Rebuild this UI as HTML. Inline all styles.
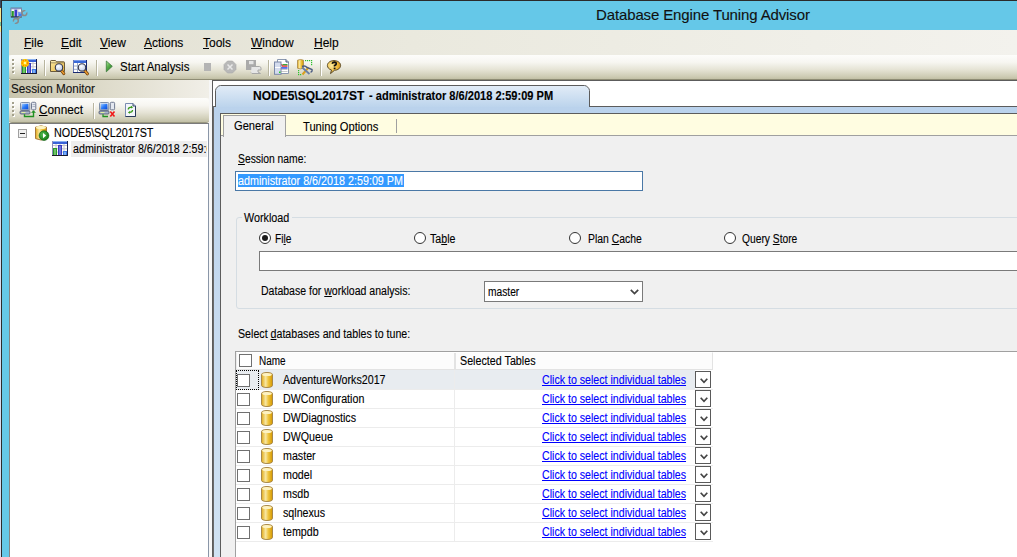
<!DOCTYPE html>
<html><head><meta charset="utf-8">
<style>
*{margin:0;padding:0;box-sizing:border-box}
html,body{width:1017px;height:557px;overflow:hidden;background:#fff}
body{position:relative;font-family:"Liberation Sans",sans-serif;font-size:12px;color:#000}
.a{position:absolute}
.t{position:absolute;white-space:nowrap;line-height:1;transform-origin:0 0;-webkit-text-stroke:0.12px currentColor}
u{text-decoration:underline;text-underline-offset:1px}
</style></head><body>
<svg width="0" height="0" style="position:absolute"><defs>
<linearGradient id="gold" x1="0" x2="1"><stop offset="0" stop-color="#e0aa18"/><stop offset=".38" stop-color="#f8e7a2"/><stop offset=".62" stop-color="#efc43e"/><stop offset="1" stop-color="#d49800"/></linearGradient>
<g id="db"><path d="M0.5 2.5 A5.5 2 0 0 1 11.5 2.5 V13.5 A5.5 2 0 0 1 0.5 13.5 Z" fill="url(#gold)" stroke="#a8884a" stroke-width="1"/><ellipse cx="6" cy="2.6" rx="4.8" ry="1.5" fill="#fdf2c2"/></g>
</defs></svg><div class="a" style="left:0px;top:0px;width:1px;height:557px;background:linear-gradient(#3a4a60 0,#3a4a60 8px,#f8e890 8px,#f8e890 22px,#7cc4a0 22px,#7cc4a0 26px,#f8e890 26px,#f8e890 32px,#d8dcf0 32px)"></div>
<div class="a" style="left:1px;top:0px;width:1016px;height:557px;background:#2b2b2b"></div>
<div class="a" style="left:2px;top:1px;width:1015px;height:556px;background:#65c8e8"></div>
<svg class="a" style="left:0;top:0" width="32" height="30" viewBox="0 0 32 30">
<rect x="11" y="8" width="10.5" height="9" fill="#fff" stroke="#6a7080" stroke-width=".8"/>
<rect x="11" y="8" width="10.5" height="1.3" fill="#8090c0"/>
<path d="M11 12H21.5M14.5 9V17M18 9V17" stroke="#c8c8d0" stroke-width=".8"/>
<rect x="11.6" y="11" width="2.2" height="5.8" fill="#2a9a2a"/><rect x="14.6" y="9.6" width="2.6" height="7.2" fill="#3a3ac8"/><rect x="18" y="12" width="2.8" height="4.8" fill="#7a9ae8"/>
<rect x="11" y="16.4" width="10.5" height="1" fill="#202840"/>
<path d="M17.2 19.5 L23 13.9" stroke="#8a8a8a" stroke-width="1.8"/>
<circle cx="24.3" cy="13.2" r="2.4" fill="none" stroke="#8a8a8a" stroke-width="1.5"/><path d="M24.3 13.2 L28 9.5" stroke="#65c8e8" stroke-width="2.2"/>
<circle cx="15.9" cy="20.8" r="2.4" fill="none" stroke="#8a8a8a" stroke-width="1.5"/><path d="M15.9 20.8 L12.2 24.5" stroke="#65c8e8" stroke-width="2.2"/>
<circle cx="20.3" cy="15" r="1.4" fill="#3a80f0"/></svg>
<div class="t" style="left:596px;top:7px;font-size:15px;color:#111;letter-spacing:-0.13px">Database Engine Tuning Advisor</div>
<div class="a" style="left:9px;top:30px;width:1008px;height:25px;background:linear-gradient(to right,#e2e0d2,#eae9de 40%,#f3f2ed)"></div>
<div class="t" style="left:24px;top:37px;font-size:12px;color:#000;"><u>F</u>ile</div>
<div class="t" style="left:61px;top:37px;font-size:12px;color:#000;"><u>E</u>dit</div>
<div class="t" style="left:100px;top:37px;font-size:12px;color:#000;"><u>V</u>iew</div>
<div class="t" style="left:144px;top:37px;font-size:12px;color:#000;"><u>A</u>ctions</div>
<div class="t" style="left:203px;top:37px;font-size:12px;color:#000;"><u>T</u>ools</div>
<div class="t" style="left:251px;top:37px;font-size:12px;color:#000;"><u>W</u>indow</div>
<div class="t" style="left:314px;top:37px;font-size:12px;color:#000;"><u>H</u>elp</div>
<div class="a" style="left:9px;top:55px;width:4px;height:25px;background:#f0efe8"></div>
<div class="a" style="left:9px;top:55px;width:1008px;height:25px;background:linear-gradient(#fdfdfb,#f7f6f1 30%,#e6e4d6 60%,#cfcdb6 88%,#c2c0a6);border-bottom:1px solid #8e8c74;border-radius:3px 0 0 3px"></div>
<div class="a" style="left:13px;top:60px;width:2px;height:2px;background:#fff"></div>
<div class="a" style="left:12px;top:59px;width:2px;height:2px;background:#a3a08c"></div>
<div class="a" style="left:13px;top:64px;width:2px;height:2px;background:#fff"></div>
<div class="a" style="left:12px;top:63px;width:2px;height:2px;background:#a3a08c"></div>
<div class="a" style="left:13px;top:68px;width:2px;height:2px;background:#fff"></div>
<div class="a" style="left:12px;top:67px;width:2px;height:2px;background:#a3a08c"></div>
<div class="a" style="left:13px;top:72px;width:2px;height:2px;background:#fff"></div>
<div class="a" style="left:12px;top:71px;width:2px;height:2px;background:#a3a08c"></div>
<div class="a" style="left:44px;top:60px;width:1px;height:16px;background:#b8b59f"></div>
<div class="a" style="left:45px;top:60px;width:1px;height:16px;background:#fff"></div>
<div class="a" style="left:96px;top:60px;width:1px;height:16px;background:#b8b59f"></div>
<div class="a" style="left:97px;top:60px;width:1px;height:16px;background:#fff"></div>
<div class="a" style="left:268px;top:60px;width:1px;height:16px;background:#b8b59f"></div>
<div class="a" style="left:269px;top:60px;width:1px;height:16px;background:#fff"></div>
<div class="a" style="left:320px;top:60px;width:1px;height:16px;background:#b8b59f"></div>
<div class="a" style="left:321px;top:60px;width:1px;height:16px;background:#fff"></div>
<div class="t" style="left:120px;top:61px;font-size:12px;color:#000;transform:scaleX(0.954);">Start Analysis</div>
<div class="a" style="left:9px;top:80px;width:203px;height:477px;background:#f4f3ee"></div>
<div class="a" style="left:9px;top:80px;width:200px;height:18px;background:linear-gradient(to right,#c9c5ae,#dfdccc 50%,#f1efe8)"></div>
<div class="t" style="left:11px;top:83px;font-size:12px;color:#111;transform:scaleX(0.976);">Session Monitor</div>
<div class="a" style="left:9px;top:98px;width:200px;height:25px;background:linear-gradient(#fdfdfb,#f7f6f1 30%,#e6e4d6 60%,#cfcdb6 88%,#c2c0a6);border-bottom:1px solid #9a9880;border-radius:0 3px 3px 3px"></div>
<div class="a" style="left:13px;top:103px;width:2px;height:2px;background:#fff"></div>
<div class="a" style="left:12px;top:102px;width:2px;height:2px;background:#a3a08c"></div>
<div class="a" style="left:13px;top:107px;width:2px;height:2px;background:#fff"></div>
<div class="a" style="left:12px;top:106px;width:2px;height:2px;background:#a3a08c"></div>
<div class="a" style="left:13px;top:111px;width:2px;height:2px;background:#fff"></div>
<div class="a" style="left:12px;top:110px;width:2px;height:2px;background:#a3a08c"></div>
<div class="a" style="left:13px;top:115px;width:2px;height:2px;background:#fff"></div>
<div class="a" style="left:12px;top:114px;width:2px;height:2px;background:#a3a08c"></div>
<div class="a" style="left:93px;top:103px;width:1px;height:16px;background:#b8b59f"></div>
<div class="a" style="left:94px;top:103px;width:1px;height:16px;background:#fff"></div>
<div class="t" style="left:39px;top:104px;font-size:12px;color:#000;transform:scaleX(0.985);"><u>C</u>onnect</div>
<div class="a" style="left:9px;top:123px;width:200px;height:434px;background:#fff;border-top:1px solid #7a7a7a;border-left:1px solid #858585;border-right:1px solid #8a96a8"></div>
<div class="t" style="left:54px;top:127px;font-size:12px;color:#000;transform:scaleX(0.898);">NODE5\SQL2017ST</div>
<div class="a" style="left:71px;top:141px;width:136px;height:16px;background:#eeeeee"></div>
<div class="a" style="left:71px;top:141px;width:136px;height:16px;overflow:hidden">
<div class="t" style="left:2px;top:2px;font-size:12px;color:#000;transform:scaleX(0.893);">administrator 8/6/2018 2:59:09 PM</div>
</div>
<div class="a" style="left:209px;top:80px;width:3px;height:477px;background:#f7f7f7"></div>
<div class="a" style="left:212px;top:80px;width:805px;height:477px;background:#fff;border-top:1px solid #5c5c5c"></div>
<div class="a" style="left:212px;top:80px;width:1px;height:477px;background:#5c5c5c"></div>
<div class="a" style="left:213px;top:106px;width:1px;height:451px;background:#6a6a6a"></div>
<div class="a" style="left:214px;top:106px;width:803px;height:451px;background:linear-gradient(#bad2ec,#c6daef 45%,#d0e2f2);border-top:1px solid #5c5c5c"></div>
<svg class="a" style="left:212px;top:82px" width="382" height="26" viewBox="212 82 382 26"><defs><linearGradient id="gTab" x1="0" x2="0" y1="0" y2="1"><stop offset="0" stop-color="#e2ecf7"/><stop offset="1" stop-color="#bcd4ec"/></linearGradient></defs><path d="M215.5 107 V90.5 C215.5 88.3 218.3 85.5 220.5 85.5 H584.5 C586.7 85.5 589.5 88.3 589.5 90.5 V107" fill="url(#gTab)" stroke="#5c5c5c" stroke-width="1"/></svg>
<div class="t" style="left:253px;top:90px;font-size:12px;font-weight:bold;color:#000;">NODE5\SQL2017ST</div>
<div class="t" style="left:369px;top:90px;font-size:12px;font-weight:bold;color:#000;transform:scaleX(0.92);">- administrator 8/6/2018 2:59:09 PM</div>
<div class="a" style="left:220px;top:113px;width:820px;height:460px;background:#fffde1;border:1px solid #5c5c5c"></div>
<div class="a" style="left:221px;top:135px;width:810px;height:430px;background:#f0f0f0;border-top:1px solid #a0a0a0"></div>
<div class="a" style="left:223px;top:115px;width:63px;height:22px;background:#f0f0f0;border:1px solid #a0a0a0;border-bottom:none"></div>
<div class="t" style="left:234px;top:120px;font-size:12px;color:#000;transform:scaleX(0.928);">General</div>
<div class="t" style="left:303px;top:121px;font-size:12px;color:#000;transform:scaleX(0.93);">Tuning Options</div>
<div class="a" style="left:396px;top:119px;width:1px;height:14px;background:#a0a0a0"></div>
<div class="t" style="left:238px;top:153px;font-size:12px;color:#000;transform:scaleX(0.86);"><u>S</u>ession name:</div>
<div class="a" style="left:235px;top:171px;width:408px;height:20px;background:#fff;border:1px solid #4a78a6"></div>
<div class="a" style="left:238px;top:174px;width:166px;height:13px;background:#3399ff"></div>
<div class="t" style="left:238px;top:175px;font-size:12px;color:#fff;transform:scaleX(0.896);">administrator 8/6/2018 2:59:09 PM</div>
<div class="a" style="left:236px;top:217px;width:800px;height:92px;border:1px solid #d5dde3;border-radius:3px"></div>
<div class="a" style="left:242px;top:212px;width:50px;height:10px;background:#f0f0f0"></div>
<div class="t" style="left:244px;top:212px;font-size:12px;color:#000;transform:scaleX(0.898);">Workload</div>
<div class="a" style="left:259px;top:232px;width:12px;height:12px;background:#fff;border:1px solid #333;border-radius:50%"></div>
<div class="a" style="left:262px;top:235px;width:6px;height:6px;background:#1a1a1a;border-radius:50%"></div>
<div class="a" style="left:414px;top:232px;width:12px;height:12px;background:#fff;border:1px solid #333;border-radius:50%"></div>
<div class="a" style="left:569px;top:232px;width:12px;height:12px;background:#fff;border:1px solid #333;border-radius:50%"></div>
<div class="a" style="left:724px;top:232px;width:12px;height:12px;background:#fff;border:1px solid #333;border-radius:50%"></div>
<div class="t" style="left:275px;top:233px;font-size:12px;color:#000;transform:scaleX(0.85);">Fi<u>l</u>e</div>
<div class="t" style="left:430px;top:233px;font-size:12px;color:#000;transform:scaleX(0.886);">Ta<u>b</u>le</div>
<div class="t" style="left:588px;top:233px;font-size:12px;color:#000;transform:scaleX(0.866);">Plan <u>C</u>ache</div>
<div class="t" style="left:742px;top:233px;font-size:12px;color:#000;transform:scaleX(0.855);">Query <u>S</u>tore</div>
<div class="a" style="left:259px;top:251px;width:770px;height:20px;background:#fff;border:1px solid #7a7a7a"></div>
<div class="t" style="left:261px;top:285px;font-size:12px;color:#000;transform:scaleX(0.878);">Database for <u>w</u>orkload analysis:</div>
<div class="a" style="left:484px;top:281px;width:159px;height:21px;background:#fff;border:1px solid #7a7a7a"></div>
<div class="t" style="left:488px;top:286px;font-size:12px;color:#000;transform:scaleX(0.853);">master</div>
<svg class="a" style="left:630px;top:289px" width="9" height="6" viewBox="0 0 9 6"><path d="M0.8 0.8 L4.5 4.6 L8.2 0.8" fill="none" stroke="#444" stroke-width="1.7"/></svg>
<div class="t" style="left:238px;top:328px;font-size:12px;color:#000;transform:scaleX(0.887);">Select <u>d</u>atabases and tables to tune:</div>
<div class="a" style="left:235px;top:351px;width:800px;height:220px;background:#fff;border:1px solid #a0a0a0"></div>
<div class="a" style="left:236px;top:352px;width:477px;height:17px;background:#fcfcfc;border-left:1px solid #ececec;border-top:1px solid #fff;border-right:1px solid #e3e3e3"></div>
<div class="a" style="left:236px;top:369px;width:477px;height:1px;background:#e3e3e3"></div>
<div class="a" style="left:454px;top:353px;width:2px;height:16px;background:#e3e3e3"></div>
<div class="a" style="left:239px;top:354px;width:13px;height:13px;background:#fff;border:1px solid #707070"></div>
<div class="t" style="left:259px;top:355px;font-size:12px;color:#000;transform:scaleX(0.83);">Name</div>
<div class="t" style="left:460px;top:355px;font-size:12px;color:#000;transform:scaleX(0.894);">Selected Tables</div>
<div class="a" style="left:236px;top:370px;width:459px;height:19px;background:#e8ecf0"></div>
<div class="a" style="left:236px;top:389px;width:477px;height:1px;background:#ececec"></div>
<div class="a" style="left:454px;top:370px;width:1px;height:19px;background:#ececec"></div>
<div class="a" style="left:237px;top:374px;width:13px;height:13px;background:#fff;border:1px solid #707070"></div>
<svg class="a" style="left:261px;top:372px" width="12" height="16" viewBox="0 0 12 16"><path d="M0.5 2.5 A5.5 2 0 0 1 11.5 2.5 V13.5 A5.5 2 0 0 1 0.5 13.5 Z" fill="url(#gold)" stroke="#a8884a" stroke-width="1"/><ellipse cx="6" cy="2.6" rx="4.8" ry="1.5" fill="#fdf2c2"/></svg>
<div class="t" style="left:283px;top:374px;font-size:12px;color:#000;transform:scaleX(0.89);">AdventureWorks2017</div>
<div class="t" style="left:542px;top:374px;font-size:12px;color:#0000ff;transform:scaleX(0.885);"><u>Click to select individual tables</u></div>
<div class="a" style="left:695px;top:371px;width:16px;height:17px;background:#fff;border:1px solid #5a5a5a"></div>
<svg class="a" style="left:700px;top:378px" width="8" height="6" viewBox="0 0 8 6"><path d="M0.7 0.7 L4 4.3 L7.3 0.7" fill="none" stroke="#444" stroke-width="1.7"/></svg>
<div class="a" style="left:236px;top:408px;width:477px;height:1px;background:#ececec"></div>
<div class="a" style="left:454px;top:389px;width:1px;height:19px;background:#ececec"></div>
<div class="a" style="left:237px;top:393px;width:13px;height:13px;background:#fff;border:1px solid #707070"></div>
<svg class="a" style="left:261px;top:391px" width="12" height="16" viewBox="0 0 12 16"><path d="M0.5 2.5 A5.5 2 0 0 1 11.5 2.5 V13.5 A5.5 2 0 0 1 0.5 13.5 Z" fill="url(#gold)" stroke="#a8884a" stroke-width="1"/><ellipse cx="6" cy="2.6" rx="4.8" ry="1.5" fill="#fdf2c2"/></svg>
<div class="t" style="left:283px;top:393px;font-size:12px;color:#000;transform:scaleX(0.89);">DWConfiguration</div>
<div class="t" style="left:542px;top:393px;font-size:12px;color:#0000ff;transform:scaleX(0.885);"><u>Click to select individual tables</u></div>
<div class="a" style="left:695px;top:390px;width:16px;height:17px;background:#fff;border:1px solid #5a5a5a"></div>
<svg class="a" style="left:700px;top:397px" width="8" height="6" viewBox="0 0 8 6"><path d="M0.7 0.7 L4 4.3 L7.3 0.7" fill="none" stroke="#444" stroke-width="1.7"/></svg>
<div class="a" style="left:236px;top:427px;width:477px;height:1px;background:#ececec"></div>
<div class="a" style="left:454px;top:408px;width:1px;height:19px;background:#ececec"></div>
<div class="a" style="left:237px;top:412px;width:13px;height:13px;background:#fff;border:1px solid #707070"></div>
<svg class="a" style="left:261px;top:410px" width="12" height="16" viewBox="0 0 12 16"><path d="M0.5 2.5 A5.5 2 0 0 1 11.5 2.5 V13.5 A5.5 2 0 0 1 0.5 13.5 Z" fill="url(#gold)" stroke="#a8884a" stroke-width="1"/><ellipse cx="6" cy="2.6" rx="4.8" ry="1.5" fill="#fdf2c2"/></svg>
<div class="t" style="left:283px;top:412px;font-size:12px;color:#000;transform:scaleX(0.89);">DWDiagnostics</div>
<div class="t" style="left:542px;top:412px;font-size:12px;color:#0000ff;transform:scaleX(0.885);"><u>Click to select individual tables</u></div>
<div class="a" style="left:695px;top:409px;width:16px;height:17px;background:#fff;border:1px solid #5a5a5a"></div>
<svg class="a" style="left:700px;top:416px" width="8" height="6" viewBox="0 0 8 6"><path d="M0.7 0.7 L4 4.3 L7.3 0.7" fill="none" stroke="#444" stroke-width="1.7"/></svg>
<div class="a" style="left:236px;top:446px;width:477px;height:1px;background:#ececec"></div>
<div class="a" style="left:454px;top:427px;width:1px;height:19px;background:#ececec"></div>
<div class="a" style="left:237px;top:431px;width:13px;height:13px;background:#fff;border:1px solid #707070"></div>
<svg class="a" style="left:261px;top:429px" width="12" height="16" viewBox="0 0 12 16"><path d="M0.5 2.5 A5.5 2 0 0 1 11.5 2.5 V13.5 A5.5 2 0 0 1 0.5 13.5 Z" fill="url(#gold)" stroke="#a8884a" stroke-width="1"/><ellipse cx="6" cy="2.6" rx="4.8" ry="1.5" fill="#fdf2c2"/></svg>
<div class="t" style="left:283px;top:431px;font-size:12px;color:#000;transform:scaleX(0.89);">DWQueue</div>
<div class="t" style="left:542px;top:431px;font-size:12px;color:#0000ff;transform:scaleX(0.885);"><u>Click to select individual tables</u></div>
<div class="a" style="left:695px;top:428px;width:16px;height:17px;background:#fff;border:1px solid #5a5a5a"></div>
<svg class="a" style="left:700px;top:435px" width="8" height="6" viewBox="0 0 8 6"><path d="M0.7 0.7 L4 4.3 L7.3 0.7" fill="none" stroke="#444" stroke-width="1.7"/></svg>
<div class="a" style="left:236px;top:465px;width:477px;height:1px;background:#ececec"></div>
<div class="a" style="left:454px;top:446px;width:1px;height:19px;background:#ececec"></div>
<div class="a" style="left:237px;top:450px;width:13px;height:13px;background:#fff;border:1px solid #707070"></div>
<svg class="a" style="left:261px;top:448px" width="12" height="16" viewBox="0 0 12 16"><path d="M0.5 2.5 A5.5 2 0 0 1 11.5 2.5 V13.5 A5.5 2 0 0 1 0.5 13.5 Z" fill="url(#gold)" stroke="#a8884a" stroke-width="1"/><ellipse cx="6" cy="2.6" rx="4.8" ry="1.5" fill="#fdf2c2"/></svg>
<div class="t" style="left:283px;top:450px;font-size:12px;color:#000;transform:scaleX(0.89);">master</div>
<div class="t" style="left:542px;top:450px;font-size:12px;color:#0000ff;transform:scaleX(0.885);"><u>Click to select individual tables</u></div>
<div class="a" style="left:695px;top:447px;width:16px;height:17px;background:#fff;border:1px solid #5a5a5a"></div>
<svg class="a" style="left:700px;top:454px" width="8" height="6" viewBox="0 0 8 6"><path d="M0.7 0.7 L4 4.3 L7.3 0.7" fill="none" stroke="#444" stroke-width="1.7"/></svg>
<div class="a" style="left:236px;top:484px;width:477px;height:1px;background:#ececec"></div>
<div class="a" style="left:454px;top:465px;width:1px;height:19px;background:#ececec"></div>
<div class="a" style="left:237px;top:469px;width:13px;height:13px;background:#fff;border:1px solid #707070"></div>
<svg class="a" style="left:261px;top:467px" width="12" height="16" viewBox="0 0 12 16"><path d="M0.5 2.5 A5.5 2 0 0 1 11.5 2.5 V13.5 A5.5 2 0 0 1 0.5 13.5 Z" fill="url(#gold)" stroke="#a8884a" stroke-width="1"/><ellipse cx="6" cy="2.6" rx="4.8" ry="1.5" fill="#fdf2c2"/></svg>
<div class="t" style="left:283px;top:469px;font-size:12px;color:#000;transform:scaleX(0.89);">model</div>
<div class="t" style="left:542px;top:469px;font-size:12px;color:#0000ff;transform:scaleX(0.885);"><u>Click to select individual tables</u></div>
<div class="a" style="left:695px;top:466px;width:16px;height:17px;background:#fff;border:1px solid #5a5a5a"></div>
<svg class="a" style="left:700px;top:473px" width="8" height="6" viewBox="0 0 8 6"><path d="M0.7 0.7 L4 4.3 L7.3 0.7" fill="none" stroke="#444" stroke-width="1.7"/></svg>
<div class="a" style="left:236px;top:503px;width:477px;height:1px;background:#ececec"></div>
<div class="a" style="left:454px;top:484px;width:1px;height:19px;background:#ececec"></div>
<div class="a" style="left:237px;top:488px;width:13px;height:13px;background:#fff;border:1px solid #707070"></div>
<svg class="a" style="left:261px;top:486px" width="12" height="16" viewBox="0 0 12 16"><path d="M0.5 2.5 A5.5 2 0 0 1 11.5 2.5 V13.5 A5.5 2 0 0 1 0.5 13.5 Z" fill="url(#gold)" stroke="#a8884a" stroke-width="1"/><ellipse cx="6" cy="2.6" rx="4.8" ry="1.5" fill="#fdf2c2"/></svg>
<div class="t" style="left:283px;top:488px;font-size:12px;color:#000;transform:scaleX(0.89);">msdb</div>
<div class="t" style="left:542px;top:488px;font-size:12px;color:#0000ff;transform:scaleX(0.885);"><u>Click to select individual tables</u></div>
<div class="a" style="left:695px;top:485px;width:16px;height:17px;background:#fff;border:1px solid #5a5a5a"></div>
<svg class="a" style="left:700px;top:492px" width="8" height="6" viewBox="0 0 8 6"><path d="M0.7 0.7 L4 4.3 L7.3 0.7" fill="none" stroke="#444" stroke-width="1.7"/></svg>
<div class="a" style="left:236px;top:522px;width:477px;height:1px;background:#ececec"></div>
<div class="a" style="left:454px;top:503px;width:1px;height:19px;background:#ececec"></div>
<div class="a" style="left:237px;top:507px;width:13px;height:13px;background:#fff;border:1px solid #707070"></div>
<svg class="a" style="left:261px;top:505px" width="12" height="16" viewBox="0 0 12 16"><path d="M0.5 2.5 A5.5 2 0 0 1 11.5 2.5 V13.5 A5.5 2 0 0 1 0.5 13.5 Z" fill="url(#gold)" stroke="#a8884a" stroke-width="1"/><ellipse cx="6" cy="2.6" rx="4.8" ry="1.5" fill="#fdf2c2"/></svg>
<div class="t" style="left:283px;top:507px;font-size:12px;color:#000;transform:scaleX(0.89);">sqlnexus</div>
<div class="t" style="left:542px;top:507px;font-size:12px;color:#0000ff;transform:scaleX(0.885);"><u>Click to select individual tables</u></div>
<div class="a" style="left:695px;top:504px;width:16px;height:17px;background:#fff;border:1px solid #5a5a5a"></div>
<svg class="a" style="left:700px;top:511px" width="8" height="6" viewBox="0 0 8 6"><path d="M0.7 0.7 L4 4.3 L7.3 0.7" fill="none" stroke="#444" stroke-width="1.7"/></svg>
<div class="a" style="left:236px;top:541px;width:477px;height:1px;background:#ececec"></div>
<div class="a" style="left:454px;top:522px;width:1px;height:19px;background:#ececec"></div>
<div class="a" style="left:237px;top:526px;width:13px;height:13px;background:#fff;border:1px solid #707070"></div>
<svg class="a" style="left:261px;top:524px" width="12" height="16" viewBox="0 0 12 16"><path d="M0.5 2.5 A5.5 2 0 0 1 11.5 2.5 V13.5 A5.5 2 0 0 1 0.5 13.5 Z" fill="url(#gold)" stroke="#a8884a" stroke-width="1"/><ellipse cx="6" cy="2.6" rx="4.8" ry="1.5" fill="#fdf2c2"/></svg>
<div class="t" style="left:283px;top:526px;font-size:12px;color:#000;transform:scaleX(0.89);">tempdb</div>
<div class="t" style="left:542px;top:526px;font-size:12px;color:#0000ff;transform:scaleX(0.885);"><u>Click to select individual tables</u></div>
<div class="a" style="left:695px;top:523px;width:16px;height:17px;background:#fff;border:1px solid #5a5a5a"></div>
<svg class="a" style="left:700px;top:530px" width="8" height="6" viewBox="0 0 8 6"><path d="M0.7 0.7 L4 4.3 L7.3 0.7" fill="none" stroke="#444" stroke-width="1.7"/></svg>
<div class="a" style="left:236px;top:370px;width:23px;height:20px;border:1px dotted #000"></div>
<svg class="a" style="left:0;top:0" width="360" height="160" viewBox="0 0 360 160">
<defs>
<linearGradient id="gB" x1="0" x2="0" y1="0" y2="1"><stop offset="0" stop-color="#5a8ae8"/><stop offset="1" stop-color="#2a4ab8"/></linearGradient>
<linearGradient id="gGreen" x1="0" x2="1"><stop offset="0" stop-color="#2a8a2a"/><stop offset=".5" stop-color="#9ad88a"/><stop offset="1" stop-color="#2a8a2a"/></linearGradient>
<linearGradient id="gBlue" x1="0" x2="1"><stop offset="0" stop-color="#3a3ab8"/><stop offset=".5" stop-color="#8aa0f0"/><stop offset="1" stop-color="#3a3ab8"/></linearGradient>
<linearGradient id="gFold" x1="0" x2="1" y1="0" y2="1"><stop offset="0" stop-color="#fbe7a0"/><stop offset="1" stop-color="#e8b840"/></linearGradient>
<radialGradient id="gLens" cx=".4" cy=".35" r=".7"><stop offset="0" stop-color="#fff"/><stop offset="1" stop-color="#b8c8e8"/></radialGradient>
<linearGradient id="gPlay" x1="0" x2=".6" y1="0" y2="1"><stop offset="0" stop-color="#b8e8a8"/><stop offset=".5" stop-color="#5ab04a"/><stop offset="1" stop-color="#2a7a2a"/></linearGradient>
<radialGradient id="gHelp" cx=".3" cy=".4" r=".85"><stop offset="0" stop-color="#fbeaa0"/><stop offset=".55" stop-color="#eeb838"/><stop offset="1" stop-color="#c07e10"/></radialGradient>
<linearGradient id="gGoldC" x1="0" x2="1"><stop offset="0" stop-color="#e0a818"/><stop offset=".35" stop-color="#fae8a0"/><stop offset=".6" stop-color="#f0c440"/><stop offset="1" stop-color="#d09400"/></linearGradient>
<radialGradient id="gGreenC" cx=".4" cy=".4" r=".7"><stop offset="0" stop-color="#58c058"/><stop offset="1" stop-color="#0a700a"/></radialGradient>
<linearGradient id="gScr" x1="0" x2="1" y1="0" y2="1"><stop offset="0" stop-color="#9ac8ff"/><stop offset=".5" stop-color="#2a7af8"/><stop offset="1" stop-color="#0a4ad8"/></linearGradient>
<linearGradient id="gMon" x1="0" x2="0" y1="0" y2="1"><stop offset="0" stop-color="#e8eef8"/><stop offset="1" stop-color="#8898b8"/></linearGradient>
<g id="chart">
 <rect x="0" y="0" width="16" height="15" fill="#fff"/>
 <path d="M0 4.5H16M0 7.8H16M0 11.1H16M4 3V15M8 3V15M12 3V15" stroke="#c4c4cc" stroke-width="1"/>
 <rect x="0" y="0" width="16" height="3" fill="#3a62d8"/>
 <rect x="0" y="0" width="16" height="1" fill="#8ab0f0"/>
 <rect x="0" y="0" width="1" height="15" fill="#8a8ab8"/>
 <rect x="1" y="7" width="4" height="8" fill="#2a9a2a"/><rect x="2.5" y="8" width="1" height="6" fill="#b8e8a8"/>
 <rect x="6" y="4" width="4" height="11" fill="#3a3ac0"/><rect x="7.5" y="5" width="1" height="9" fill="#a0b0f8"/>
 <rect x="11" y="10" width="4" height="5" fill="#3a7ae8"/><rect x="12.5" y="11" width="1" height="3" fill="#c0e0ff"/>
 <rect x="0" y="14" width="16" height="1" fill="#1a1a2a"/>
 <rect x="15" y="0" width="1" height="15" fill="#1a2050"/>
</g>
</defs>
<!-- main toolbar icon1: new session -->
<g transform="translate(21,59)">
 <rect x="0" y="0" width="16" height="15" fill="#fff"/>
 <path d="M0 4.5H16M0 7.8H16M0 11.1H16M4 3V15M8 3V15M12 3V15" stroke="#c4c4cc" stroke-width="1"/>
 <rect x="0" y="0" width="16" height="3" fill="#3a62d8"/>
 <rect x="0" y="0" width="16" height="1" fill="#8ab0f0"/>
 <rect x="0" y="0" width="1" height="15" fill="#8a8ab8"/>
 <rect x="1" y="7" width="4" height="8" fill="#2a9a2a"/><rect x="2.5" y="8" width="1" height="6" fill="#b8e8a8"/>
 <rect x="6" y="4" width="4" height="11" fill="#3a3ac0"/><rect x="7.5" y="5" width="1" height="9" fill="#a0b0f8"/>
 <rect x="11" y="10" width="4" height="5" fill="#3a7ae8"/><rect x="12.5" y="11" width="1" height="3" fill="#c0e0ff"/>
 <rect x="0" y="14" width="16" height="1" fill="#1a1a2a"/>
 <rect x="15" y="0" width="1" height="15" fill="#1a2050"/>

 <circle cx="4" cy="4" r="4" fill="#ffd000"/><circle cx="4" cy="4" r="2.8" fill="none" stroke="#ff7a00" stroke-width="1.4" stroke-dasharray="1.3 1.3"/><circle cx="4" cy="4" r="1.2" fill="#fff6a0"/>
</g>
<!-- folder + magnifier -->
<g transform="translate(50,60)">
 <path d="M0.5 11.5V1.2Q0.5 0.5 1.2 0.5H5.5L6.5 1.8H13.8Q14.5 1.8 14.5 2.5V11.5Z" fill="url(#gFold)" stroke="#6a5a3a" stroke-width="1"/>
 <path d="M1.5 1.5H5.3L6 2.5H1.5Z" fill="#fff6c8"/>
 <path d="M1 2.8H14" stroke="#8a7a50" stroke-width=".8"/>
 <path d="M11.2 10.2 L13.8 13.6" stroke="#6a3a08" stroke-width="3" stroke-linecap="round"/>
 <path d="M11.2 10.2 L13.8 13.6" stroke="#e89a30" stroke-width="1.6" stroke-linecap="round"/>
 <circle cx="9" cy="7.4" r="3.7" fill="url(#gLens)" stroke="#3a3a4a" stroke-width="1.1"/>
</g>
<!-- table + magnifier -->
<g transform="translate(73,60)">
 <rect x="0" y="0" width="14" height="13" fill="#fff"/>
 <path d="M0 6H14M0 9.3H14M4.5 3V13" stroke="#9aaac8" stroke-width="1"/>
 <rect x="0" y="0" width="14" height="3" fill="#3a6ad8"/>
 <rect x="0" y="0" width="14" height="1" fill="#7a9ae8"/>
 <rect x="0" y="0" width="1" height="13" fill="#6a7ab8"/>
 <rect x="13" y="0" width="1" height="13" fill="#1a2a70"/>
 <rect x="0" y="12" width="14" height="1" fill="#1a2a70"/>
 <path d="M11.6 10.4 L14.4 13.8" stroke="#6a3a08" stroke-width="3" stroke-linecap="round"/>
 <path d="M11.6 10.4 L14.4 13.8" stroke="#e89a30" stroke-width="1.6" stroke-linecap="round"/>
 <circle cx="9" cy="7.4" r="3.7" fill="url(#gLens)" stroke="#3a3a4a" stroke-width="1.1"/>
</g>
<!-- play -->
<path d="M106.3 61 L112.3 66.3 L106.3 71.8Z" fill="url(#gPlay)" stroke="#3a7a3a" stroke-width=".8"/>
<!-- stop -->
<rect x="204" y="63" width="7" height="8" fill="#b4b4b4"/>
<!-- cancel -->
<path d="M227.5 61H232.5L236 64.5V69.5L232.5 73H227.5L224 69.5V64.5Z" fill="#b8b8b8" stroke="#a8a8a8" stroke-width=".6"/>
<path d="M227.5 64.5L232.5 69.5M232.5 64.5L227.5 69.5" stroke="#e8e8e8" stroke-width="1.5"/>
<!-- save disabled -->
<rect x="246" y="60" width="10" height="10" fill="#aaa"/>
<rect x="249" y="61" width="4.5" height="3.2" fill="#e4e4e4"/>
<path d="M251.5 66.5 H259.5 L261 67.5 V70 H258 V72 L260.5 73.5 H252 L251 72.5" fill="#e6e6e6" stroke="#a8a8a8" stroke-width="1"/>
<!-- report -->
<g transform="translate(274,59)">
 <path d="M3.5 0.5H12L14.5 3V14.5H3.5Z" fill="#fff" stroke="#8a98b0" stroke-width="1"/>
 <path d="M12 0.5V3H14.5" fill="#d8e0ea" stroke="#4a5a78" stroke-width="1"/>
 <path d="M7 5.5L8.5 6.5" stroke="#e02020" stroke-width="1.3"/>
 <rect x="8.5" y="5.2" width="5" height="1.2" fill="#109010"/>
 <rect x="8" y="6.5" width="5.5" height="1.2" fill="#e02020"/>
 <rect x="7" y="8.3" width="6.5" height="1.3" fill="#1030e0"/>
 <path d="M7 10.5H13.5M7 12.5H13.5" stroke="#c8c8c8" stroke-width="1"/>
 <rect x="0.5" y="3" width="6.5" height="12.3" fill="#d4dcee" stroke="#7a88a8" stroke-width="1"/>
 <path d="M1 8.5H6.5" stroke="#fff" stroke-width="1"/>
 <rect x="5" y="12.5" width="1.5" height="1.5" fill="#20d020"/>
</g>
<!-- db tools -->
<g transform="translate(297,59)">
 <path d="M0.5 1.2Q3.3 -0.2 6.5 1.2V9.2Q3.3 10.6 0.5 9.2Z" fill="url(#gGoldC)" stroke="#a8884a" stroke-width=".8"/>
 <g fill="#30c030"><rect x="8" y="1" width="1.2" height="1.2"/><rect x="10" y="1" width="1.2" height="1.2"/><rect x="12" y="1" width="1.2" height="1.2"/><rect x="14" y="1" width="1.2" height="1.2"/><rect x="14" y="3" width="1.2" height="1.2"/><rect x="14" y="5" width="1.2" height="1.2"/><rect x="1" y="11" width="1.2" height="1.2"/><rect x="1" y="13" width="1.2" height="1.2"/><rect x="1" y="15" width="1.2" height="1.2"/><rect x="3" y="15" width="1.2" height="1.2"/></g>
 <path d="M5.5 15.5L11.5 8.5" stroke="#d8a020" stroke-width="2"/>
 <path d="M5.2 8.5L12.5 15" stroke="#6a80a8" stroke-width="1.8"/>
 <path d="M5 7.5 Q8 6 10 8.5 L15 10.5 Q15.5 13 13.5 13" fill="none" stroke="#4a5a80" stroke-width="1.4"/>
</g>
<!-- help -->
<g transform="translate(327,60)">
 <path d="M7 0.6C10.8 0.6 13.6 2.8 13.6 5.4C13.6 8 11 10.2 7.5 10.3L3.5 13.6L4.5 10C2 9.3 0.4 7.6 0.4 5.4C0.4 2.8 3.2 0.6 7 0.6Z" fill="url(#gHelp)" stroke="#5a4a28" stroke-width="1"/>
 <path d="M5.2 3.8Q5.6 2.2 7.4 2.2Q9.4 2.3 9.2 4Q9 5 7.6 5.6V6.6" fill="none" stroke="#111" stroke-width="1.7"/>
 <rect x="6.7" y="7.6" width="1.8" height="1.6" fill="#111"/>
</g>
<!-- connect -->
<g transform="translate(20,102)">
 <rect x="0.5" y="0.5" width="9.3" height="8" rx="1" fill="url(#gMon)" stroke="#8090a8" stroke-width="1"/>
 <rect x="2" y="1.8" width="6.3" height="5.4" fill="url(#gScr)"/>
 <rect x="0" y="9" width="10" height="3" rx="1" fill="#a8b4cc" stroke="#4a5068" stroke-width=".8"/>
 <rect x="1.5" y="10" width="4" height="1" fill="#e0f0a0"/>
 <rect x="11.5" y="0.3" width="4.3" height="7.5" rx="1" fill="#e4e8f0" stroke="#707a90" stroke-width="1"/>
 <path d="M12.5 2.5H15M12.5 4.5H15" stroke="#a0a8b8" stroke-width=".8"/>
 <path d="M4.5 12.3V14.5H13.5V10" fill="none" stroke="#209020" stroke-width="1.4"/>
 <path d="M11 10.8L13.5 8.2L16 10.8Z" fill="#209020"/>
</g>
<!-- disconnect -->
<g transform="translate(99,102)">
 <rect x="0.5" y="0.5" width="9.3" height="8" rx="1" fill="url(#gMon)" stroke="#8090a8" stroke-width="1"/>
 <rect x="2" y="1.8" width="6.3" height="5.4" fill="url(#gScr)"/>
 <rect x="0" y="9" width="10" height="3" rx="1" fill="#a8b4cc" stroke="#4a5068" stroke-width=".8"/>
 <rect x="1.5" y="10" width="4" height="1" fill="#e0f0a0"/>
 <rect x="11.3" y="0.3" width="4.3" height="7.5" rx="1" fill="#e4e8f0" stroke="#707a90" stroke-width="1"/>
 <path d="M4 12.3V14.5H9" fill="none" stroke="#209020" stroke-width="1.3"/>
 <path d="M11.3 9.5L15.5 14.5M15.5 9.5L11.3 14.5" stroke="#f01818" stroke-width="1.6"/>
</g>
<!-- refresh page -->
<g transform="translate(125,103)">
 <path d="M0.5 0.5H8L10.5 3V13.5H0.5Z" fill="#f4f6fc" stroke="#7a8cb0" stroke-width="1"/>
 <path d="M10.5 3V13.5H0.5" fill="none" stroke="#2a3a5a" stroke-width="1"/>
 <path d="M8 0.5V3H10.5" fill="#c8d4e8" stroke="#3a4a6a" stroke-width="1"/>
 <path d="M3.2 6.5Q3.5 4.2 6.5 4.2" fill="none" stroke="#3a9a1a" stroke-width="1.3"/>
 <path d="M6 2.8L8.2 4.2L6 5.6Z" fill="#3a9a1a"/>
 <path d="M7.6 7Q7.4 9.4 4.5 9.4" fill="none" stroke="#3a9a1a" stroke-width="1.3"/>
 <path d="M5 8L2.8 9.4L5 10.8Z" fill="#3a9a1a"/>
</g>
<!-- tree minus -->
<rect x="18.5" y="129.5" width="8" height="8" fill="#f0f0f0" stroke="#a0a0a0" stroke-width="1"/>
<rect x="20" y="133" width="5" height="1" fill="#222"/>
<!-- server db with play -->
<g transform="translate(35,125)">
 <path d="M0.5 2.2Q6 -0.6 11.5 2.2V13.6Q6 16.4 0.5 13.6Z" fill="url(#gGoldC)" stroke="#a87838" stroke-width="1"/>
 <ellipse cx="6" cy="2.4" rx="5" ry="1.6" fill="#fdf4c0"/>
 <circle cx="9" cy="10.6" r="4.9" fill="url(#gGreenC)" stroke="#0a5a0a" stroke-width=".6"/>
 <path d="M8 8L11.2 10.6L8 13.2Z" fill="#fff"/>
</g>
<!-- session chart -->
<g transform="translate(52,141)">
 <rect x="0" y="0" width="16" height="15" fill="#fff"/>
 <path d="M0 4.5H16M0 7.8H16M0 11.1H16M4 3V15M8 3V15M12 3V15" stroke="#c4c4cc" stroke-width="1"/>
 <rect x="0" y="0" width="16" height="3" fill="#3a62d8"/>
 <rect x="0" y="0" width="16" height="1" fill="#8ab0f0"/>
 <rect x="0" y="0" width="1" height="15" fill="#8a8ab8"/>
 <rect x="1" y="7" width="4" height="8" fill="#2a9a2a"/><rect x="2.5" y="8" width="1" height="6" fill="#b8e8a8"/>
 <rect x="6" y="4" width="4" height="11" fill="#3a3ac0"/><rect x="7.5" y="5" width="1" height="9" fill="#a0b0f8"/>
 <rect x="11" y="10" width="4" height="5" fill="#3a7ae8"/><rect x="12.5" y="11" width="1" height="3" fill="#c0e0ff"/>
 <rect x="0" y="14" width="16" height="1" fill="#1a1a2a"/>
 <rect x="15" y="0" width="1" height="15" fill="#1a2050"/>
</g>
</svg>
</body></html>
